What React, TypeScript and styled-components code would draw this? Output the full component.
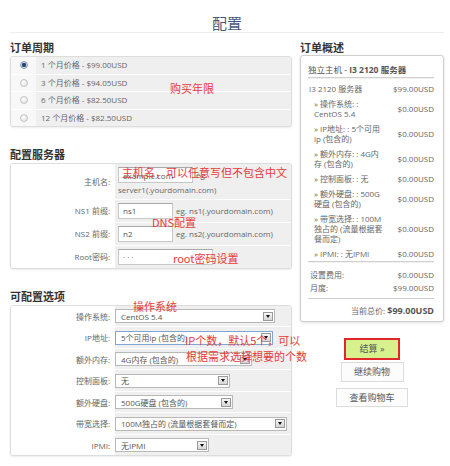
import React from 'react';
import styled, { createGlobalStyle } from 'styled-components';

const cycles = [
    { label: '1 个月价格 - $99.00USD', checked: true },
    { label: '3 个月价格 - $94.05USD', checked: false },
    { label: '6 个月价格 - $82.50USD', checked: false },
    { label: '12 个月价格 - $82.50USD', checked: false },
];

const options = [
    { label: '操作系统:', value: 'CentOS 5.4', width: 160 },
    { label: 'IP地址:', value: '5个可用ip (包含的)', width: 158, focused: true },
    { label: '额外内存:', value: '4G内存 (包含的)', width: 137 },
    { label: '控制面板:', value: '无', width: 115 },
    { label: '额外硬盘:', value: '500G硬盘 (包含的)', width: 118 },
    { label: '带宽选择:', value: '100M独占的 (流量根据套餐而定)', width: 172 },
    { label: 'IPMI:', value: '无IPMI', width: 94 },
];

const summary = [
    { lines: ['I3 2120 服务器'], price: '$99.00USD', sub: false },
    { lines: ['» 操作系统: :', 'CentOS 5.4'], price: '$0.00USD', sub: true },
    { lines: ['» IP地址: : 5个可用', 'ip (包含的)'], price: '$0.00USD', sub: true },
    { lines: ['» 额外内存: : 4G内', '存 (包含的)'], price: '$0.00USD', sub: true },
    { lines: ['» 控制面板: : 无'], price: '$0.00USD', sub: true },
    { lines: ['» 额外硬盘: : 500G', '硬盘 (包含的)'], price: '$0.00USD', sub: true },
    { lines: ['» 带宽选择: : 100M', '独占的 (流量根据套', '餐而定)'], price: '$0.00USD', sub: true },
    { lines: ['» IPMI: : 无IPMI'], price: '$0.00USD', sub: true },
];

const notes = [
    { text: '购买年限', left: 170, top: 82 },
    { text: '主机名，可以任意写但不包含中文', left: 122, top: 166 },
    { text: 'DNS配置', left: 152, top: 216 },
    { text: 'root密码设置', left: 173, top: 252 },
    { text: '操作系统', left: 133, top: 300 },
    { text: 'IP个数，默认5个，可以', left: 185, top: 334 },
    { text: '根据需求选择想要的个数', left: 186, top: 350 },
];

const App: React.FC = () => {
    return (
        <Page>
            <GlobalStyle />
            <Title>配置</Title>
            <Columns>
                <div>
                    <SectionHeading>订单周期</SectionHeading>
                    <Panel>
                        {cycles.map(c => (
                            <CycleRow key={c.label}>
                                <RadioCell>
                                    <Radio checked={c.checked} />
                                </RadioCell>
                                <CycleText>{c.label}</CycleText>
                            </CycleRow>
                        ))}
                    </Panel>

                    <SectionHeading $gap>配置服务器</SectionHeading>
                    <Panel>
                        <FormRow>
                            <FieldLabel>主机名:</FieldLabel>
                            <FieldCell>
                                <TextInput readOnly defaultValue="example.com" style={{ width: 75 }} />
                                <Hint>eg. server1(.yourdomain.com)</Hint>
                            </FieldCell>
                        </FormRow>
                        <FormRow>
                            <FieldLabel>NS1 前缀:</FieldLabel>
                            <FieldCell>
                                <TextInput readOnly defaultValue="ns1" style={{ width: 55 }} />
                                <Hint>eg. ns1(.yourdomain.com)</Hint>
                            </FieldCell>
                        </FormRow>
                        <FormRow>
                            <FieldLabel>NS2 前缀:</FieldLabel>
                            <FieldCell>
                                <TextInput readOnly defaultValue="n2" style={{ width: 55 }} />
                                <Hint>eg. ns2(.yourdomain.com)</Hint>
                            </FieldCell>
                        </FormRow>
                        <FormRow>
                            <FieldLabel>Root密码:</FieldLabel>
                            <FieldCell>
                                <TextInput readOnly defaultValue="· · ·" style={{ width: 95 }} />
                            </FieldCell>
                        </FormRow>
                    </Panel>

                    <SectionHeading $gap>可配置选项</SectionHeading>
                    <Panel>
                        {options.map(o => (
                            <OptionRow key={o.label}>
                                <FieldLabel>{o.label}</FieldLabel>
                                <OptionCell>
                                    <SelectBox $focused={o.focused} style={{ width: o.width }}>
                                        <span>{o.value}</span>
                                        <SelectArrow />
                                    </SelectBox>
                                </OptionCell>
                            </OptionRow>
                        ))}
                    </Panel>
                </div>

                <div>
                    <SectionHeading>订单概述</SectionHeading>
                    <SummaryCard>
                        <SummaryHeader>
                            独立主机 - <strong>I3 2120 服务器</strong>
                        </SummaryHeader>
                        <ItemList>
                            {summary.map(item => (
                                <Item key={item.lines[0]}>
                                    <ItemName $sub={item.sub}>
                                        {item.lines.map((l, i) => (
                                            <div key={i}>{l}</div>
                                        ))}
                                    </ItemName>
                                    <Price>{item.price}</Price>
                                </Item>
                            ))}
                        </ItemList>
                        <Totals>
                            <TotalLine>
                                <span>设置费用:</span>
                                <span>$0.00USD</span>
                            </TotalLine>
                            <TotalLine>
                                <span>月度:</span>
                                <span>$99.00USD</span>
                            </TotalLine>
                        </Totals>
                        <GrandTotal>
                            当前总价: <strong>$99.00USD</strong>
                        </GrandTotal>
                    </SummaryCard>

                    <Actions>
                        <CheckoutButton>结算 »</CheckoutButton>
                        <PlainButton $width={63} $height={20} $top={2}>继续购物</PlainButton>
                        <PlainButton $width={72} $height={19} $top={6}>查看购物车</PlainButton>
                    </Actions>
                </div>
            </Columns>

            {notes.map(n => (
                <Note key={n.text} style={{ left: n.left, top: n.top }}>
                    {n.text}
                </Note>
            ))}
        </Page>
    );
};

const GlobalStyle = createGlobalStyle`
    html, body {
        margin: 0;
        padding: 0;
        background: #fff;
    }
    body {
        font-family: "Open Sans", "Noto Sans CJK SC", sans-serif;
        color: #555;
    }
`;

const Page = styled.div`
    position: relative;
    width: 450px;
    height: 466px;
    padding: 0 6px 0 10px;
    box-sizing: border-box;
    overflow: hidden;
`;

const Title = styled.h1`
    margin: 0;
    padding-top: 14px;
    height: 18px;
    line-height: 18px;
    font-family: "Noto Sans CJK SC", sans-serif;
    font-size: 15px;
    font-weight: normal;
    text-align: center;
    color: #44597c;
    border-bottom: 1px solid #eee;
`;

const Columns = styled.div`
    display: grid;
    grid-template-columns: 282px 144px;
    column-gap: 8px;
`;

const SectionHeading = styled.h2<{ $gap?: boolean }>`
    margin: ${p => (p.$gap ? '20px' : '7px')} 0 2px;
    height: 14px;
    line-height: 14px;
    font-family: "Noto Sans CJK SC", sans-serif;
    font-size: 11px;
    font-weight: bold;
    color: #333;
`;

const Panel = styled.div`
    border: 1px solid #ddd;
    border-radius: 3px;
    background: #fff;
    box-shadow: 0 1px 2px rgba(0, 0, 0, 0.08);
    overflow: hidden;
`;

const CycleRow = styled.div`
    display: grid;
    grid-template-columns: 25px 1fr;
    height: 16.5px;
    border-bottom: 1px solid #fff;
    background: #f8f8f8;

    &:last-child {
        border-bottom: 0;
    }
`;

const RadioCell = styled.div`
    display: flex;
    align-items: center;
    justify-content: center;
`;

const Radio = styled.span<{ checked: boolean }>`
    width: 8px;
    height: 8px;
    border-radius: 50%;
    box-sizing: border-box;
    border: 1px solid ${p => (p.checked ? '#8a9bb0' : '#c4c4c4')};
    background: ${p =>
        p.checked
            ? 'radial-gradient(circle at 50% 50%, #1d3b63 0, #2d5384 45%, #c9d3df 60%, #eef1f4 100%)'
            : 'radial-gradient(circle at 40% 40%, #fff 0, #e6e6e6 70%, #d4d4d4 100%)'};
`;

const CycleText = styled.div`
    background: #efefef;
    padding-left: 5px;
    font-size: 8px;
    line-height: 16.5px;
    color: #666;
`;

const FormRow = styled.div`
    display: grid;
    grid-template-columns: 104px 1fr;
    border-bottom: 1px solid #fff;

    &:last-child {
        border-bottom: 0;
    }
`;

const FieldLabel = styled.div`
    display: flex;
    align-items: center;
    justify-content: flex-end;
    padding-right: 5px;
    background: #fff;
    font-size: 8px;
    color: #666;
`;

const FieldCell = styled.div`
    background: #efefef;
    padding: 3px 3px;
    font-size: 8px;
    line-height: 12px;
    min-height: 16px;
`;

const TextInput = styled.input`
    display: inline-block;
    vertical-align: middle;
    height: 16px;
    box-sizing: border-box;
    margin: 0;
    padding: 0 4px;
    border: 1px solid #c8c8c8;
    border-top-color: #a9a9a9;
    background: #fff;
    font-family: inherit;
    font-size: 8px;
    color: #555;
    outline: none;
`;

const Hint = styled.span`
    margin-left: 3px;
    vertical-align: middle;
    color: #666;
`;

const OptionRow = styled(FormRow)`
    height: 20.5px;
`;

const OptionCell = styled.div`
    display: flex;
    align-items: center;
    background: #efefef;
    padding-left: 0;
`;

const SelectBox = styled.div<{ $focused?: boolean }>`
    display: flex;
    align-items: center;
    justify-content: space-between;
    height: 14px;
    box-sizing: border-box;
    padding-left: 5px;
    border: 1px solid ${p => (p.$focused ? '#7fa6d3' : '#b8b8b8')};
    background: #fff;
    font-size: 8px;
    color: #555;
    white-space: nowrap;
`;

const SelectArrow = styled.span`
    position: relative;
    width: 10px;
    height: 9px;
    margin-right: 1px;
    box-sizing: border-box;
    border: 1px solid #9a9a9a;
    background: linear-gradient(#f6f6f6, #d6d6d6);

    &::after {
        content: '';
        position: absolute;
        left: 2px;
        top: 2px;
        border-left: 2px solid transparent;
        border-right: 2px solid transparent;
        border-top: 3px solid #111;
    }
`;

const SummaryCard = styled.div`
    margin-top: -1px;
    padding: 0 9px 0 7px;
    border: 1px solid #cfcfcf;
    border-radius: 3px;
    background: #fff;
    box-shadow: 0 1px 3px rgba(0, 0, 0, 0.12);
    font-size: 8px;
    color: #666;
`;

const SummaryHeader = styled.div`
    padding: 8px 0 2px;
    line-height: 11px;
    font-size: 8.5px;
    color: #555;
    border-bottom: 1px solid #cfcfcf;
    box-shadow: 0 1px 0 #f0f0f0;

    strong {
        font-weight: bold;
    }
`;

const ItemList = styled.div`
    margin-top: 3px;
`;

const Item = styled.div`
    display: flex;
    justify-content: space-between;
    align-items: center;
    padding: 2.5px 0;
    line-height: 10px;
`;

const ItemName = styled.div<{ $sub: boolean }>`
    width: ${p => (p.$sub ? 72 : 78)}px;
    padding-left: ${p => (p.$sub ? 6 : 1)}px;
    white-space: nowrap;
`;

const Price = styled.div`
    text-align: right;
`;

const Totals = styled.div`
    padding: 6px 0 4px;
    border-top: 1px solid #cfcfcf;
    box-shadow: inset 0 1px 0 #f2f2f2;
`;

const TotalLine = styled.div`
    display: flex;
    justify-content: space-between;
    line-height: 13px;
    padding-left: 2px;
`;

const GrandTotal = styled.div`
    padding: 5px 0 4px;
    border-top: 1px solid #cfcfcf;
    line-height: 13px;
    text-align: right;

    strong {
        font-size: 9px;
        color: #555;
    }
`;

const Actions = styled.div`
    display: flex;
    flex-direction: column;
    align-items: center;
    margin-top: 16px;
`;

const CheckoutButton = styled.div`
    width: 56px;
    height: 22px;
    box-sizing: border-box;
    border: 2px solid #e0262b;
    background: #d7f18f;
    font-size: 9px;
    line-height: 18px;
    text-align: center;
    color: #555;
`;

const PlainButton = styled.div<{ $width: number; $height: number; $top: number }>`
    width: ${p => p.$width}px;
    height: ${p => p.$height}px;
    margin-top: ${p => p.$top}px;
    box-sizing: border-box;
    border: 1px solid #dcdcdc;
    background: #fcfcfc;
    font-size: 9px;
    line-height: ${p => p.$height - 2}px;
    text-align: center;
    color: #555;
`;

const Note = styled.span`
    position: absolute;
    font-family: "Noto Sans CJK SC", sans-serif;
    font-size: 11px;
    line-height: 12px;
    color: #e63a3a;
    white-space: nowrap;
`;

export default App;
